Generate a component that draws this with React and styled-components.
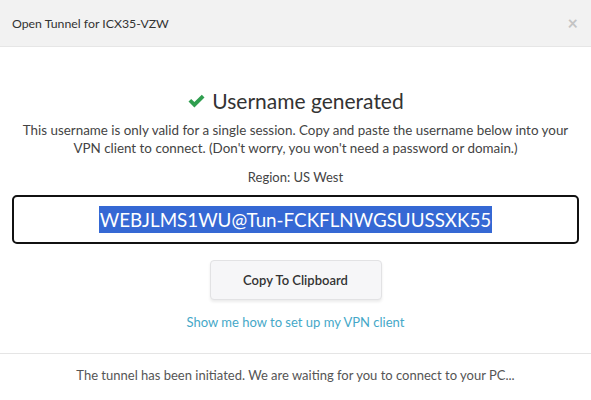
import styled, { createGlobalStyle } from 'styled-components';

const Global = createGlobalStyle`
  html, body {
    margin: 0;
    padding: 0;
    background: #fff;
  }
  body {
    font-family: Lato, "Noto Sans", "Liberation Sans", sans-serif;
    color: #333;
  }
`;

export default function App() {
  return (
    <>
      <Global />
      <Modal>
        <Header>
          <Title>Open Tunnel for ICX35-VZW</Title>
          <Close>×</Close>
        </Header>
        <Body>
          <Heading>
            <svg width="19" height="16" viewBox="0 0 19 16">
              <path d="M1.5 8.6 L4.2 5.9 L7.4 9.1 L14.8 1.7 L17.5 4.4 L7.4 14.5 Z" fill="#2f9e4f" />
            </svg>
            Username generated
          </Heading>
          <Text>
            This username is only valid for a single session. Copy and paste the username below into your
            VPN client to connect. (Don't worry, you won't need a password or domain.)
          </Text>
          <Region>Region: US West</Region>
          <UserBox>
            <Selected>WEBJLMS1WU@Tun-FCKFLNWGSUUSSXK55</Selected>
          </UserBox>
          <CopyButton>Copy To Clipboard</CopyButton>
          <HelpLink href="#">Show me how to set up my VPN client</HelpLink>
        </Body>
        <Footer>The tunnel has been initiated. We are waiting for you to connect to your PC...</Footer>
      </Modal>
    </>
  );
}

const Modal = styled.div`
  width: 591px;
  height: 400px;
  display: flex;
  flex-direction: column;
  background: #fff;
`;

const Header = styled.div`
  height: 47px;
  background: #f2f2f2;
  border-bottom: 1px solid #e6e6e6;
  display: flex;
  align-items: center;
  justify-content: space-between;
  padding: 0 11px 0 12px;
  box-sizing: border-box;
`;

const Title = styled.div`
  font-size: 12.3px;
  color: #333;
`;

const Close = styled.div`
  font-size: 18px;
  color: #c4c4c4;
  font-weight: bold;
  margin-right: 2px;
`;

const Body = styled.div`
  display: flex;
  flex-direction: column;
  align-items: center;
  padding: 41px 12px 0 12px;
  border-bottom: 1px solid #e5e5e5;
  height: 307px;
  box-sizing: border-box;
`;

const Heading = styled.h2`
  margin: 0;
  font-size: 21px;
  font-weight: normal;
  color: #333;
  display: flex;
  align-items: center;
  gap: 6px;
  line-height: 26px;
`;

const Text = styled.p`
  margin: 8px 0 0 0;
  max-width: 552px;
  font-size: 13.4px;
  line-height: 17.5px;
  color: #444;
  text-align: center;
`;

const Region = styled.div`
  margin-top: 11px;
  font-size: 13px;
  line-height: 18px;
  color: #444;
`;

const UserBox = styled.div`
  margin-top: 9px;
  align-self: stretch;
  height: 49px;
  box-sizing: border-box;
  border: 2px solid #111;
  border-radius: 5px;
  display: flex;
  align-items: center;
  justify-content: center;
`;

const Selected = styled.span`
  background: #3568d4;
  color: #fff;
  font-size: 18.8px;
  line-height: 27px;
  padding: 0 1px;
`;

const CopyButton = styled.button`
  margin-top: 16px;
  width: 172px;
  height: 40px;
  border: 1px solid #e2e2e4;
  border-radius: 4px;
  background: #f6f6f8;
  box-shadow: 0 2px 3px rgba(0, 0, 0, 0.08);
  font-family: inherit;
  font-size: 13px;
  font-weight: 600;
  color: #333;
`;

const HelpLink = styled.a`
  margin-top: 14px;
  font-size: 13px;
  color: #45a8c8;
  text-decoration: none;
`;

const Footer = styled.div`
  flex: 1;
  display: flex;
  align-items: center;
  justify-content: center;
  font-size: 13px;
  color: #555;
  padding-bottom: 4px;
`;
